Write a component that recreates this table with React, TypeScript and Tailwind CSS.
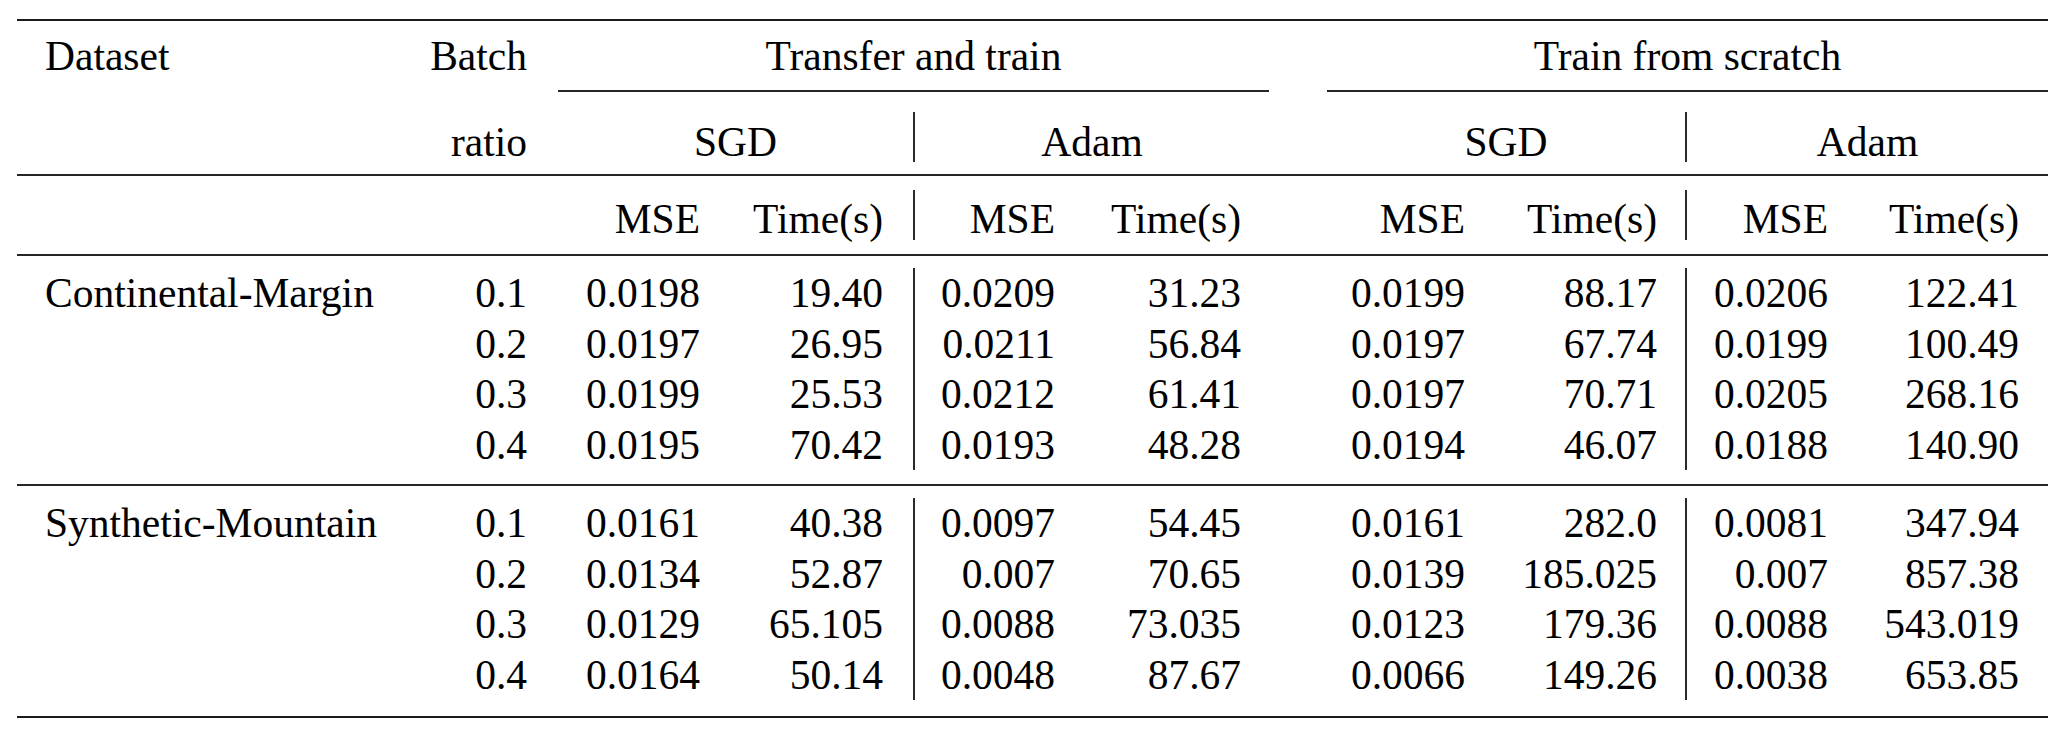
import React from "react";

const cols =
  "grid grid-cols-[383px_158px_172px_183px_172px_184px_58px_168px_190px_173px_190px]";

type Row = {
  name?: string;
  ratio: string;
  v: [string, string, string, string, string, string, string, string];
};

const block1: Row[] = [
  { name: "Continental-Margin", ratio: "0.1", v: ["0.0198", "19.40", "0.0209", "31.23", "0.0199", "88.17", "0.0206", "122.41"] },
  { ratio: "0.2", v: ["0.0197", "26.95", "0.0211", "56.84", "0.0197", "67.74", "0.0199", "100.49"] },
  { ratio: "0.3", v: ["0.0199", "25.53", "0.0212", "61.41", "0.0197", "70.71", "0.0205", "268.16"] },
  { ratio: "0.4", v: ["0.0195", "70.42", "0.0193", "48.28", "0.0194", "46.07", "0.0188", "140.90"] },
];

const block2: Row[] = [
  { name: "Synthetic-Mountain", ratio: "0.1", v: ["0.0161", "40.38", "0.0097", "54.45", "0.0161", "282.0", "0.0081", "347.94"] },
  { ratio: "0.2", v: ["0.0134", "52.87", "0.007", "70.65", "0.0139", "185.025", "0.007", "857.38"] },
  { ratio: "0.3", v: ["0.0129", "65.105", "0.0088", "73.035", "0.0123", "179.36", "0.0088", "543.019"] },
  { ratio: "0.4", v: ["0.0164", "50.14", "0.0048", "87.67", "0.0066", "149.26", "0.0038", "653.85"] },
];

function DataRow({ r }: { r: Row }) {
  return (
    <div className={`${cols} h-[50.5px] leading-[50.5px] whitespace-nowrap`}>
      <div className="pl-[28px]">{r.name ?? ""}</div>
      <div className="text-right pr-[31px]">{r.ratio}</div>
      <div className="text-right pr-[30px]">{r.v[0]}</div>
      <div className="text-right pr-[30px]">{r.v[1]}</div>
      <div className="text-right pr-[30px] border-l-2 border-[#2a2a2a]">{r.v[2]}</div>
      <div className="text-right pr-[28px]">{r.v[3]}</div>
      <div />
      <div className="text-right pr-[30px]">{r.v[4]}</div>
      <div className="text-right pr-[28px]">{r.v[5]}</div>
      <div className="text-right pr-[30px] border-l-2 border-[#2a2a2a]">{r.v[6]}</div>
      <div className="text-right pr-[29px]">{r.v[7]}</div>
    </div>
  );
}

export default function App() {
  return (
    <div className="w-[2067px] h-[737px] bg-white pl-[17px] pt-[19px] [font-family:Liberation_Serif,Times_New_Roman,serif] text-[41.5px] text-black">
      <div className="w-[2031px]">
        {/* top rule */}
        <div className="h-[2px] bg-[#1a1a1a]" />

        {/* header row 1 */}
        <div className={`${cols} h-[69px] pt-[12px] leading-[46px] whitespace-nowrap`}>
          <div className="pl-[28px]">Dataset</div>
          <div className="text-right pr-[31px]">Batch</div>
          <div className="col-span-4 text-center">Transfer and train</div>
          <div />
          <div className="col-span-4 text-center">Train from scratch</div>
        </div>

        {/* cmidrules */}
        <div className={`${cols} h-[2px]`}>
          <div className="col-span-2" />
          <div className="col-span-4 bg-[#262626]" />
          <div />
          <div className="col-span-4 bg-[#262626]" />
        </div>

        {/* header row 2 */}
        <div className={`${cols} pt-[20px] pb-[12px] leading-[46px] whitespace-nowrap`}>
          <div className="h-[50px]" />
          <div className="h-[50px] pt-[7px] text-right pr-[31px]">ratio</div>
          <div className="col-span-2 h-[50px] pt-[7px] text-center">SGD</div>
          <div className="col-span-2 h-[50px] pt-[7px] text-center border-l-2 border-[#2a2a2a]">Adam</div>
          <div className="h-[50px]" />
          <div className="col-span-2 h-[50px] pt-[7px] text-center">SGD</div>
          <div className="col-span-2 h-[50px] pt-[7px] text-center border-l-2 border-[#2a2a2a]">Adam</div>
        </div>

        {/* midrule */}
        <div className="h-[2px] bg-[#262626]" />

        {/* header row 3 */}
        <div className={`${cols} pt-[14px] pb-[14px] leading-[46px] whitespace-nowrap`}>
          <div className="h-[50px]" />
          <div className="h-[50px]" />
          <div className="h-[50px] pt-[6px] text-right pr-[30px]">MSE</div>
          <div className="h-[50px] pt-[6px] text-right pr-[30px]">Time(s)</div>
          <div className="h-[50px] pt-[6px] text-right pr-[30px] border-l-2 border-[#2a2a2a]">MSE</div>
          <div className="h-[50px] pt-[6px] text-right pr-[28px]">Time(s)</div>
          <div className="h-[50px]" />
          <div className="h-[50px] pt-[6px] text-right pr-[30px]">MSE</div>
          <div className="h-[50px] pt-[6px] text-right pr-[28px]">Time(s)</div>
          <div className="h-[50px] pt-[6px] text-right pr-[30px] border-l-2 border-[#2a2a2a]">MSE</div>
          <div className="h-[50px] pt-[6px] text-right pr-[29px]">Time(s)</div>
        </div>

        {/* midrule */}
        <div className="h-[2px] bg-[#262626]" />

        {/* block 1 */}
        <div className="pt-[12px] pb-[14px]">
          {block1.map((r, i) => (
            <DataRow key={i} r={r} />
          ))}
        </div>

        {/* midrule */}
        <div className="h-[2px] bg-[#262626]" />

        {/* block 2 */}
        <div className="pt-[12px] pb-[16px]">
          {block2.map((r, i) => (
            <DataRow key={i} r={r} />
          ))}
        </div>

        {/* bottom rule */}
        <div className="h-[2px] bg-[#1a1a1a]" />
      </div>
    </div>
  );
}
